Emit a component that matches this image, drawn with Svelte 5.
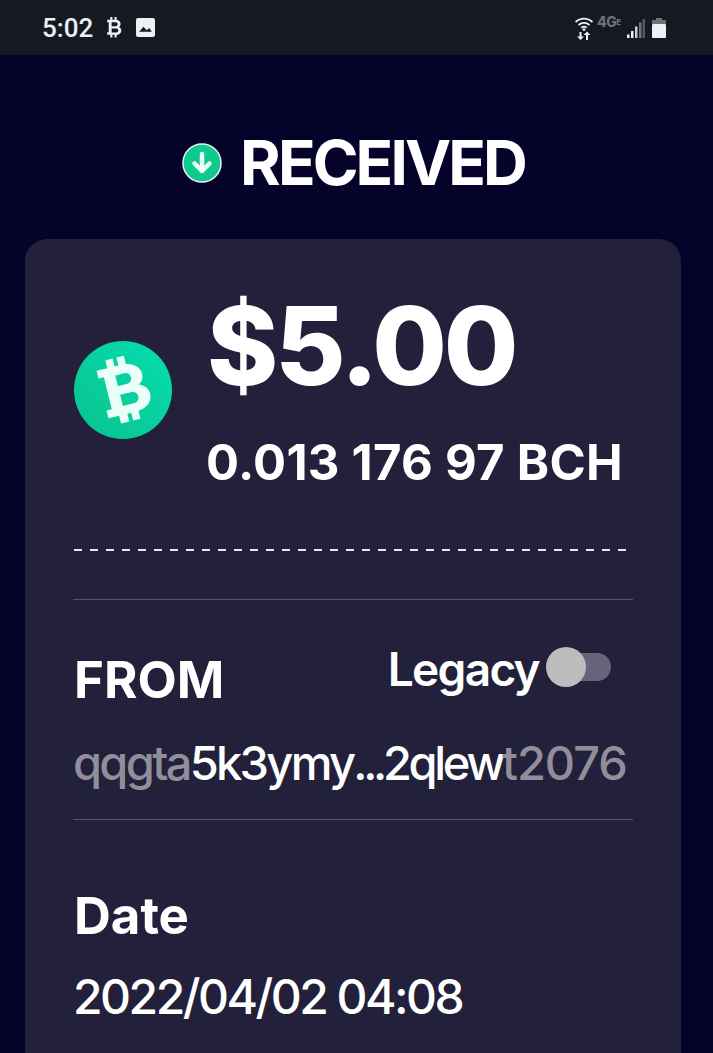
<script lang="ts">
  const tx = {
    amount: '$5.00',
    crypto: '0.013 176 97 BCH',
    from: { head: 'qqgta', start: '5k3ymy', mid: '2qlew', tail: 't2076' },
    date: '2022/04/02 04:08'
  };
</script>

<div class="screen">
  <header class="status">
    <div class="left">
      <span class="time">5:02</span>
      <svg class="btc-mini" viewBox="0 0 16 20" width="17" height="21" aria-hidden="true">
        <path fill="#eef0f2" fill-rule="evenodd" d="M1 2.500h3V0h2v2.500h2V0h2v2.700c2.400.4 3.800 1.900 3.800 3.900 0 1.300-.6 2.300-1.600 2.900 1.400.6 2.300 1.800 2.300 3.300 0 2.400-1.700 4-4.500 4.300V19.500H8V17H6v2.500H4V17H1v-2.500h1.500v-9.500H1zM5.300 5.100v3.600H9c1.200 0 2-.7 2-1.800s-.8-1.800-2-1.800zM5.300 11v3.700h4.200c1.300 0 2.100-.7 2.100-1.800S10.800 11 9.500 11z"/>
      </svg>
      <svg class="pic" viewBox="0 0 18 18" width="19" height="19" aria-hidden="true">
        <path fill="#eef0f2" fill-rule="evenodd" d="M2 0h14a2 2 0 0 1 2 2v14a2 2 0 0 1-2 2H2a2 2 0 0 1-2-2V2a2 2 0 0 1 2-2zM3 13h12l-2.500-3.500-2.300 2-1.400-1.400-1.600-1.900z"/>
      </svg>
    </div>
    <div class="right">
      <svg viewBox="0 0 18 24" width="18" height="24" aria-hidden="true">
        <g fill="none" stroke="#eef0f2" stroke-width="1.800">
          <path d="M.6 6C5.400 1.400 12.600 1.400 17.400 6"/>
          <path d="M3.500 9c3.200-2.800 7.800-2.800 11 0"/>
          <path d="M6.300 11.800c1.800-1.500 3.600-1.500 5.400 0"/>
        </g>
        <circle cx="9" cy="13.600" r="1.400" fill="#eef0f2"/>
        <path fill="#eef0f2" d="M4.500 16h2v4.500H9L5.500 24 2 20.500h2.500zM12 15.500l3.500 3.500H13v5h-2v-5H8.500z"/>
      </svg>
      <span class="net">4G<small>E</small></span>
      <svg viewBox="0 0 18 20" width="18" height="20" aria-hidden="true">
        <rect x="0" y="16.500" width="2.500" height="3.500" fill="#eef0f2"/>
        <rect x="4" y="13" width="2.500" height="7" fill="#eef0f2"/>
        <rect x="8" y="8.500" width="2.500" height="11.500" fill="#c9cbcf"/>
        <rect x="12" y="4.500" width="2.500" height="15.500" fill="#6f7278"/>
        <rect x="15.500" y="1" width="2.500" height="19" fill="#55585f"/>
      </svg>
      <svg class="battery" viewBox="0 0 14 20" width="14" height="20" aria-hidden="true">
        <path fill="#6f7278" d="M4 0h6v2h3a1 1 0 0 1 1 1v3H0V3a1 1 0 0 1 1-1h3z"/>
        <rect y="6" width="14" height="14" fill="#eef0f2" rx="1"/>
      </svg>
    </div>
  </header>

  <main>
    <h1>
      <svg viewBox="0 0 40 40" width="40" height="40" aria-hidden="true">
        <circle cx="20" cy="20" r="19" fill="#10c98f" stroke="#e8f5f1" stroke-width="1.500"/>
        <path d="M20 11v17M12.500 20.500 20 28l7.500-7.500" fill="none" stroke="#eafff8" stroke-width="4.500" stroke-linecap="round" stroke-linejoin="round"/>
      </svg>
      RECEIVED
    </h1>

    <section class="card">
      <div class="amounts">
        <svg class="coin" viewBox="0 0 98 98" width="98" height="98" aria-hidden="true">
          <defs>
            <linearGradient id="coin-grad" x1="0" y1="1" x2="1" y2="0">
              <stop offset="0" stop-color="#0ac18e"/>
              <stop offset="1" stop-color="#04dfae"/>
            </linearGradient>
          </defs>
          <circle cx="49" cy="49" r="49" fill="url(#coin-grad)"/>
          <g transform="rotate(-14 49 49)">
            <path fill="#eafff8" fill-rule="evenodd" d="M28 24h11v-8h7.500v8h4v-8h7.500v8.500c8 1.500 13.500 6.500 13.500 13 0 4.500-2 8-6 10 5.500 2 9 6 9 11.500 0 8-6.500 13-15.500 14v8h-7.500v-8h-4v8H39v-8H28v-8h5.500V32H28zM45 33v11h9c3.500 0 5.800-2.200 5.800-5.500S57.500 33 54 33zM45 53v11.500h11c3.800 0 6.300-2.300 6.300-5.800S59.800 53 56 53z"/>
          </g>
        </svg>
        <div class="values">
          <div class="fiat">{tx.amount}</div>
          <div class="crypto">{tx.crypto}</div>
        </div>
      </div>

      <div class="dashes"></div>

      <div class="row from">
        <div class="row-head">
          <span class="label">FROM</span>
          <div class="legacy">
            <span>Legacy</span>
            <span class="switch"><span class="track"></span><span class="knob"></span></span>
          </div>
        </div>
        <div class="value address"><span class="dim">{tx.from.head}</span>{tx.from.start}<span class="dots">...</span><span class="mid">{tx.from.mid}</span><span class="dim tail">{tx.from.tail}</span></div>
      </div>

      <div class="row date">
        <span class="label">Date</span>
        <div class="value stamp">{tx.date}</div>
      </div>
    </section>
  </main>
</div>

<style>
  :global(body) {
    margin: 0;
    background: #05032a;
    overflow: hidden;
  }

  .screen {
    width: 713px;
    height: 1053px;
    overflow: hidden;
    background: #05032a;
    color: #fff;
    font-family: Inter, 'Noto Sans', sans-serif;
  }

  .status {
    height: 55px;
    box-sizing: border-box;
    padding: 0 47px 0 42px;
    display: flex;
    align-items: center;
    justify-content: space-between;
    background: #141922;
    color: #eef0f2;
  }

  .left, .right {
    display: flex;
    align-items: center;
  }

  .left { gap: 13px; }
  .right { gap: 4px; }

  .time {
    font-family: Roboto, sans-serif;
    font-size: 26px;
    font-weight: 500;
  }

  .net {
    width: 26px;
    margin-bottom: 12px;
    font-size: 14px;
    line-height: 14px;
    font-weight: 800;
    color: #6f7278;
    letter-spacing: -.5px;
    white-space: nowrap;
  }

  .net small {
    font-size: 8px;
    vertical-align: 2px;
  }

  .battery {
    margin-left: 3px;
  }

  main {
    padding-top: 73px;
  }

  h1 {
    margin: 0;
    height: 111px;
    display: flex;
    justify-content: center;
    gap: 18px;
    padding-right: 6px;
    font-size: 62px;
    line-height: 70px;
    font-weight: 750;
    letter-spacing: -2.900px;
  }

  h1 svg {
    margin-top: 15px;
  }

  .card {
    margin: 0 32px 0 25px;
    padding: 47px 48px 60px;
    border-radius: 22px;
    background: #22203a;
  }

  .amounts {
    display: flex;
    align-items: center;
    gap: 35px;
    padding-left: 1px;
  }

  .coin {
    margin-top: 3px;
  }

  .fiat {
    font-size: 108px;
    line-height: 120px;
    font-weight: 800;
    letter-spacing: -3px;
  }

  .crypto {
    margin-top: 29px;
    margin-left: -1px;
    font-size: 49px;
    line-height: 56px;
    font-weight: 700;
    letter-spacing: .27px;
    white-space: nowrap;
  }

  .dashes {
    margin-top: 58px;
    margin-left: 1px;
    height: 2px;
    width: 552px;
    background: repeating-linear-gradient(90deg, #e6e6f5 0 8px, transparent 8px 16px);
  }

  .row {
    border-top: 1px solid #55556a;
    margin-top: 48px;
    padding-top: 50px;
  }

  .from {
    padding-bottom: 26px;
    border-bottom: 1px solid #55556a;
  }

  .date {
    border: 0;
    margin-top: 0;
    padding-top: 66px;
  }

  .row-head {
    display: flex;
    justify-content: space-between;
    align-items: flex-start;
  }

  .label {
    display: block;
    padding-left: 1px;
    font-size: 51px;
    line-height: 60px;
    font-weight: 700;
  }

  .legacy {
    display: flex;
    align-items: center;
    margin-top: -15px;
    margin-right: 22px;
    font-size: 46px;
    line-height: 60px;
    font-weight: 600;
    letter-spacing: -1.700px;
  }

  .legacy > span:first-child {
    padding-top: 4px;
    margin-left: -1px;
  }

  .switch {
    position: relative;
    width: 65px;
    height: 40px;
    margin-left: 7px;
  }

  .track {
    position: absolute;
    left: 10px;
    right: 0;
    top: 6px;
    height: 28px;
    border-radius: 14px;
    background: #66647a;
  }

  .knob {
    position: absolute;
    left: 0;
    top: 0;
    width: 40px;
    height: 40px;
    border-radius: 50%;
    background: #bdbdbd;
  }

  .value {
    margin-top: 23px;
    line-height: 60px;
    font-weight: 500;
    white-space: nowrap;
  }

  .address {
    font-size: 47px;
    letter-spacing: -2.700px;
  }

  .dots {
    letter-spacing: -4.400px;
  }

  .mid {
    letter-spacing: -3.300px;
  }

  .tail {
    letter-spacing: -1.100px;
  }

  .stamp {
    margin-top: 21px;
    font-size: 48px;
    letter-spacing: -2.500px;
  }

  .dim {
    color: #8f8e99;
  }
</style>
